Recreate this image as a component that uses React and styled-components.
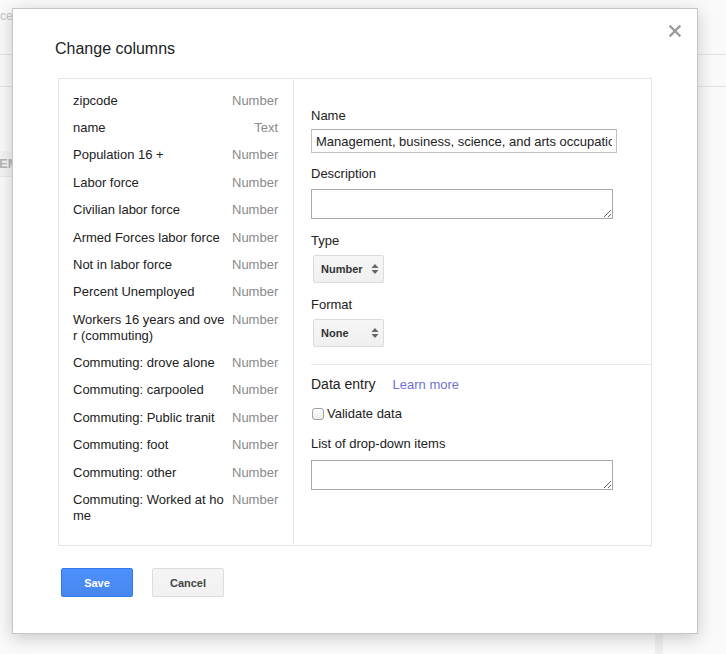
import React from "react";
import styled, { createGlobalStyle } from "styled-components";

const GlobalStyle = createGlobalStyle`
  html, body { margin: 0; padding: 0; }
  body {
    font-family: "Liberation Sans", Arial, sans-serif;
    background: #fafafa;
    color: #222;
  }
  * { box-sizing: border-box; }
`;

const Page = styled.div`
  position: relative;
  width: 726px;
  height: 654px;
  overflow: hidden;
  background: #fafafa;
  display: flex;
  flex-direction: column;
`;

const TopBar = styled.div`
  height: 55px;
  flex-shrink: 0;
  border-bottom: 1px solid #e2e2e2;
  padding-top: 9px;
  font-size: 12px;
  color: #c4c4c4;
`;

const SubBar = styled.div`
  height: 32px;
  flex-shrink: 0;
  border-bottom: 1px solid #e2e2e2;
`;

const Body = styled.div`
  flex: 1;
  display: flex;
`;

const BodyMain = styled.div`
  flex: 1;
  padding-top: 64px;
`;

const BgHeader = styled.div`
  height: 26px;
  line-height: 26px;
  background: #f4f4f4;
  border-bottom: 1px solid #e8e8e8;
  font-size: 13px;
  font-weight: bold;
  color: #b4b4b4;
  margin-left: -1px;
`;

const Track = styled.div`
  width: 8px;
  background: #efefef;
`;

const Gutter = styled.div`
  width: 63px;
`;

const Dialog = styled.div`
  position: absolute;
  left: 12px;
  top: 8px;
  width: 686px;
  height: 626px;
  background: #fff;
  border: 1px solid #c6c6c6;
  box-shadow: 0 4px 16px rgba(0, 0, 0, 0.2);
  padding: 31px 0 0 42px;
  display: flex;
  flex-direction: column;
`;

const Close = styled.button`
  position: absolute;
  top: 15px;
  right: 15px;
  width: 14px;
  height: 14px;
  padding: 0;
  border: 0;
  background: transparent;
  display: flex;
  align-items: center;
  justify-content: center;
  cursor: pointer;
`;

const Title = styled.h2`
  margin: 0 0 20px;
  font-size: 16px;
  line-height: 18px;
  font-weight: normal;
  color: #222;
`;

const Box = styled.div`
  margin-left: 3px;
  width: 594px;
  height: 468px;
  border: 1px solid #e5e5e5;
  display: grid;
  grid-template-columns: 235px 1fr;
`;

const ColumnList = styled.div`
  border-right: 1px solid #e5e5e5;
  padding: 8px 15px 0 14px;
`;

const Row = styled.div`
  display: flex;
  gap: 5px;
  padding: 5.7px 0;
  font-size: 13px;
  line-height: 16px;
`;

const ColName = styled.div`
  width: 154px;
  flex-shrink: 0;
  word-break: break-all;
  color: #222;
`;

const ColType = styled.div`
  width: 46px;
  flex-shrink: 0;
  text-align: right;
  color: #8a8a8a;
  white-space: nowrap;
`;

const Detail = styled.div`
  padding: 29px 0 0 17px;
  display: flex;
  flex-direction: column;
  align-items: flex-start;
`;

const Label = styled.div`
  font-size: 13px;
  line-height: 16px;
  color: #222;
  margin-top: ${(p) => p.$mt || 0}px;
`;

const TextInput = styled.input`
  display: block;
  margin: 5px 0 0;
  width: 306px;
  height: 24px;
  padding: 0 4px;
  border: 1px solid #c2c2c2;
  border-top-color: #b0b0b0;
  border-radius: 0;
  font-family: "Liberation Sans", Arial, sans-serif;
  font-size: 13px;
  color: #222;
  background: #fff;
  outline: none;
`;

const TextArea = styled.textarea`
  display: block;
  margin: ${(p) => p.$mt}px 0 0;
  width: 302px;
  height: 30px;
  padding: 2px 4px;
  border: 1px solid #a8a8a8;
  border-radius: 0;
  font-family: "Liberation Sans", Arial, sans-serif;
  font-size: 13px;
  background: #fff;
  resize: both;
  outline: none;
`;

const Select = styled.div`
  margin: 6px 0 0 2px;
  width: 71px;
  height: 28px;
  padding: 0 4px 0 7px;
  border: 1px solid #dcdcdc;
  border-radius: 2px;
  background: linear-gradient(#f6f6f6, #f0f0f0);
  display: flex;
  align-items: center;
  justify-content: space-between;
  font-size: 11px;
  font-weight: bold;
  color: #333;
`;

const Divider = styled.div`
  align-self: stretch;
  height: 1px;
  background: #e8e8e8;
  margin-top: 17px;
`;

const SectionHead = styled.div`
  margin-top: 11px;
  display: flex;
  align-items: baseline;
  gap: 17px;
  font-size: 14px;
  line-height: 17px;
  color: #222;
`;

const Link = styled.a`
  font-size: 13px;
  color: #7070d6;
  text-decoration: none;
`;

const CheckRow = styled.label`
  margin-top: 13px;
  display: flex;
  align-items: center;
  gap: 3px;
  font-size: 13px;
  line-height: 16px;
  color: #222;
`;

const CheckBox = styled.span`
  margin-left: 1px;
  width: 12px;
  height: 12px;
  border: 1px solid #a2a2a2;
  border-radius: 3px;
  background: linear-gradient(#fdfdfd, #ececec);
`;

const Footer = styled.div`
  margin: 22px 0 0 6px;
  display: flex;
  gap: 19px;
`;

const Button = styled.button`
  width: 72px;
  height: 29px;
  padding: 0;
  border-radius: 2px;
  font-family: "Liberation Sans", Arial, sans-serif;
  font-size: 11px;
  font-weight: bold;
  cursor: pointer;
  border: 1px solid ${(p) => (p.$primary ? "#3079ed" : "#dcdcdc")};
  background: ${(p) =>
    p.$primary
      ? "linear-gradient(#4d90fe, #4787ed)"
      : "linear-gradient(#f5f5f5, #f1f1f1)"};
  color: ${(p) => (p.$primary ? "#fff" : "#444")};
`;

const columns = [
  ["zipcode", "Number"],
  ["name", "Text"],
  ["Population 16 +", "Number"],
  ["Labor force", "Number"],
  ["Civilian labor force", "Number"],
  ["Armed Forces labor force", "Number"],
  ["Not in labor force", "Number"],
  ["Percent Unemployed", "Number"],
  ["Workers 16 years and over (commuting)", "Number"],
  ["Commuting: drove alone", "Number"],
  ["Commuting: carpooled", "Number"],
  ["Commuting: Public tranit", "Number"],
  ["Commuting: foot", "Number"],
  ["Commuting: other", "Number"],
  ["Commuting: Worked at home", "Number"],
];

const Arrows = () => (
  <svg width="8" height="12" viewBox="0 0 8 12">
    <path d="M0.5 5 L4 1 L7.5 5 Z" fill="#666" />
    <path d="M0.5 7 L4 11 L7.5 7 Z" fill="#666" />
  </svg>
);

const CloseIcon = () => (
  <svg width="12" height="12" viewBox="0 0 12 12">
    <path d="M1.5 1.5 L10.5 10.5 M10.5 1.5 L1.5 10.5" stroke="#9c9c9c" strokeWidth="2.4" strokeLinecap="square" />
  </svg>
);

export default function App() {
  return (
    <>
      <GlobalStyle />
      <Page>
        <TopBar>ce</TopBar>
        <SubBar />
        <Body>
          <BodyMain>
            <BgHeader>EM</BgHeader>
          </BodyMain>
          <Track />
          <Gutter />
        </Body>

        <Dialog>
          <Close aria-label="Close">
            <CloseIcon />
          </Close>
          <Title>Change columns</Title>
          <Box>
            <ColumnList>
              {columns.map(([name, type]) => (
                <Row key={name}>
                  <ColName>{name}</ColName>
                  <ColType>{type}</ColType>
                </Row>
              ))}
            </ColumnList>
            <Detail>
              <Label>Name</Label>
              <TextInput
                readOnly
                defaultValue="Management, business, science, and arts occupations"
              />
              <Label $mt={13}>Description</Label>
              <TextArea $mt={7} />
              <Label $mt={14}>Type</Label>
              <Select>
                <span>Number</span>
                <Arrows />
              </Select>
              <Label $mt={14}>Format</Label>
              <Select>
                <span>None</span>
                <Arrows />
              </Select>
              <Divider />
              <SectionHead>
                <span>Data entry</span>
                <Link href="#">Learn more</Link>
              </SectionHead>
              <CheckRow>
                <CheckBox />
                Validate data
              </CheckRow>
              <Label $mt={14}>List of drop-down items</Label>
              <TextArea $mt={8} />
            </Detail>
          </Box>
          <Footer>
            <Button $primary>Save</Button>
            <Button>Cancel</Button>
          </Footer>
        </Dialog>
      </Page>
    </>
  );
}
